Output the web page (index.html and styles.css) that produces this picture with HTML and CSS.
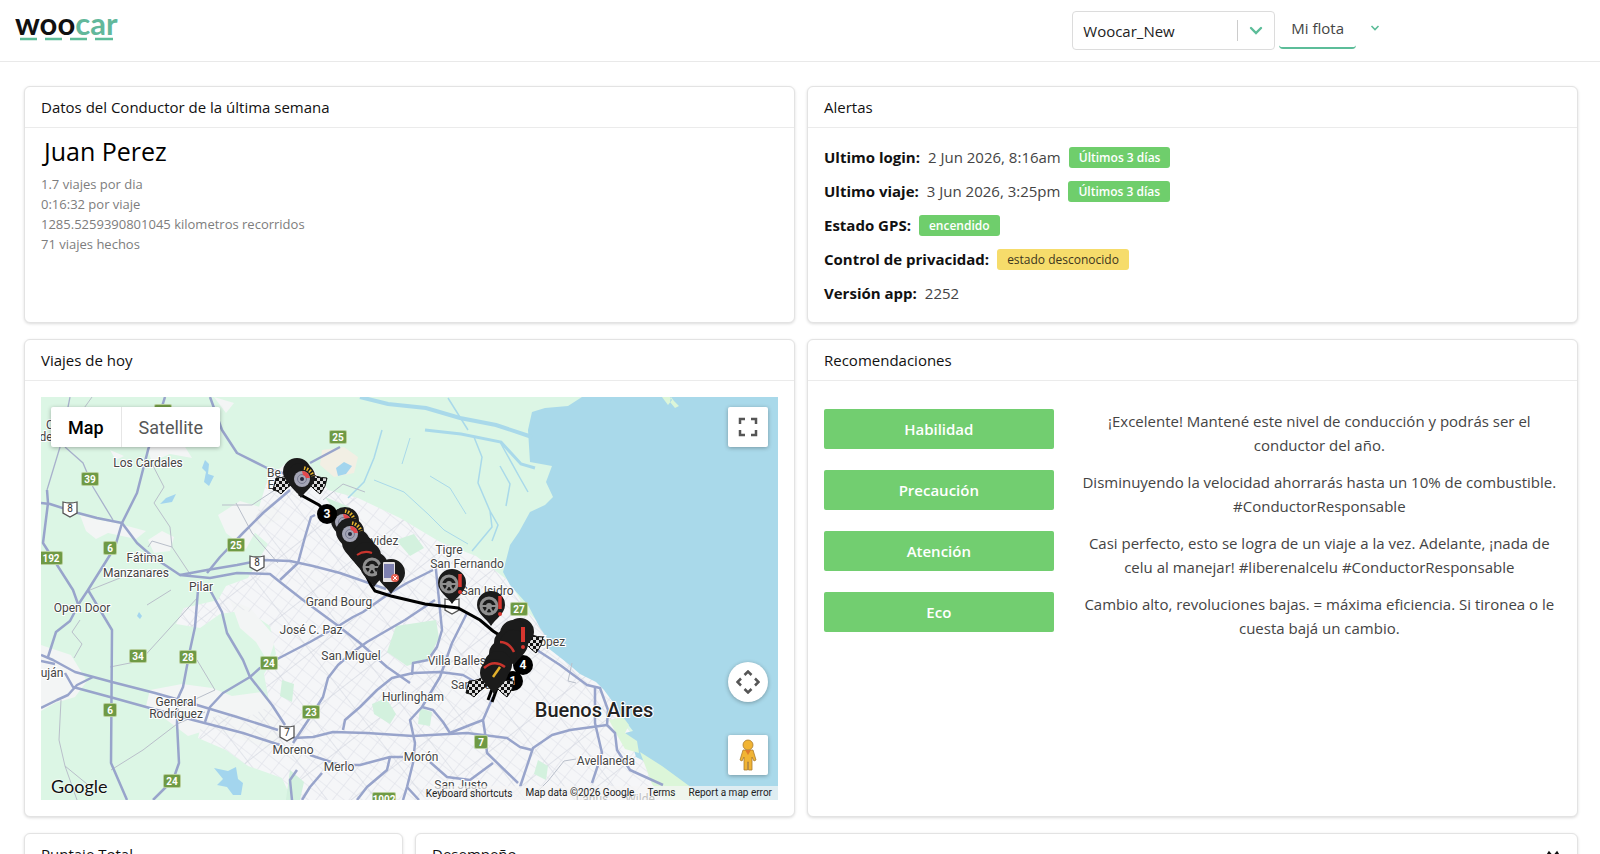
FILE: index.html
```html
<!DOCTYPE html>
<html lang="es">
<head>
  <meta charset="UTF-8">
  <meta name="viewport" content="width=device-width, initial-scale=1">
  <title>Woocar - Conductor</title>
  <link rel="stylesheet" href="styles.css">
</head>
<body>
  <header class="topbar">
    <a class="logo" href="#" aria-label="woocar">
      <svg width="110" height="40" viewBox="0 0 110 40">
        <text class="logo-text" x="0" y="28">woo<tspan fill="#62b89b">car</tspan></text>
        <path d="M5 32h17M30 32h17M55 32h17M80 32h18" stroke="#5cbd99" stroke-width="2.500"/>
      </svg>
    </a>
    <nav class="topnav">
      <div class="fleet-select">
        <select aria-label="Flota">
          <option>Woocar_New</option>
        </select>
        <svg class="fleet-arrow" width="14" height="10" viewBox="0 0 14 10"><path d="M2 2l5 5 5-5" fill="none" stroke="#5cbd99" stroke-width="2.400" stroke-linecap="round"/></svg>
      </div>
      <a class="tab" href="#">Mi flota</a>
      <button class="user-menu" aria-label="Menú">
        <svg width="10" height="8" viewBox="0 0 10 8"><path d="M1.500 2L5 5.500 8.500 2" fill="none" stroke="#5cbd99" stroke-width="1.600"/></svg>
      </button>
    </nav>
  </header>

  <main class="page">
    <div class="row halves">
      <section class="card">
        <h2>Datos del Conductor de la última semana</h2>
        <div class="card-body driver">
          <h3>Juan Perez</h3>
          <p>1.7 viajes por dia</p>
          <p>0:16:32 por viaje</p>
          <p>1285.5259390801045 kilometros recorridos</p>
          <p>71 viajes hechos</p>
        </div>
      </section>
      <section class="card">
        <h2>Alertas</h2>
        <div class="card-body alerts">
          <p><strong>Ultimo login:</strong><span>2 Jun 2026, 8:16am</span><span class="badge">Últimos 3 días</span></p>
          <p><strong>Ultimo viaje:</strong><span>3 Jun 2026, 3:25pm</span><span class="badge">Últimos 3 días</span></p>
          <p><strong>Estado GPS:</strong><span class="badge">encendido</span></p>
          <p><strong>Control de privacidad:</strong><span class="badge warning">estado desconocido</span></p>
          <p><strong>Versión app:</strong><span>2252</span></p>
        </div>
      </section>
    </div>

    <div class="row halves">
      <section class="card">
        <h2>Viajes de hoy</h2>
        <div class="card-body">
          <div class="map">
            <svg class="map-canvas" viewBox="41 397 737 403" preserveAspectRatio="xMidYMid slice">
              <defs>
                <pattern id="streets" width="13" height="11" patternUnits="userSpaceOnUse" patternTransform="rotate(38)">
                  <path d="M0 0h13M0 0v11" stroke="#dde0e7" stroke-width="1.200"/>
                </pattern>
                <pattern id="avenues" width="47" height="39" patternUnits="userSpaceOnUse" patternTransform="rotate(52)">
                  <path d="M0 0h47M0 0v39" stroke="#d0d4de" stroke-width="1.200"/>
                </pattern>
                <pattern id="checks" width="6" height="6" patternUnits="userSpaceOnUse">
                  <rect width="6" height="6" fill="#111"/>
                  <path d="M0 0h3v3H0zM3 3h3v3H3z" fill="#ddd"/>
                </pattern>
                <path id="pin" d="M0 21C-4 14-14 9-14 0A14 14 0 0 1 14 0C14 9 4 14 0 21z" fill="#1b1b1b"/>
                <g id="wheel">
                  <circle r="8" fill="none" stroke="#8f8f8f" stroke-width="3"/>
                  <circle r="3" fill="#8f8f8f"/>
                  <path d="M-7 0H7M0 0l-4 7M0 0l4 7" stroke="#8f8f8f" stroke-width="2"/>
                </g>
                <g id="disc">
                  <circle r="8" fill="#a4a5b5"/>
                  <circle r="4.500" fill="none" stroke="#777a92"/>
                  <circle r="2" fill="#26283c"/>
                  <path d="M0-8A8 8 0 0 1 8-1L4-1A4 4 0 0 0 1-4z" fill="#e5484d"/>
                  <path d="M2-11A12 12 0 0 1 11-3" fill="none" stroke="#e8b62c" stroke-width="3.500" stroke-dasharray="1.500 1.500"/>
                </g>
                <path id="flag-left" d="M8-13Q2-6-9-6L-12 6Q-8 6-4 10L2 4 10-2z" fill="url(#checks)" stroke="#111"/>
                <path id="flag-right" d="M-8-13Q-2-6 10-6L8 2Q6 6 3 10L-2 6-10-2z" fill="url(#checks)" stroke="#111"/>
                <g id="alert"><path d="M12-9v13" stroke="#d8362f" stroke-width="3.500"/><circle cx="12" cy="9" r="2" fill="#d8362f"/></g>
                <path id="route-shield" d="M-7-7Q0-5 7-7V4L0 8-7 4z" fill="#fff" stroke="#555" stroke-width="1.300"/>
                <g id="rp2"><rect x="-9" y="-7" width="18" height="14" rx="2" fill="#b8cf9e"/><rect x="-8" y="-6" width="16" height="12" rx="1" fill="#6f9a45"/></g>
                <g id="rp1"><rect x="-7" y="-7" width="14" height="14" rx="2" fill="#b8cf9e"/><rect x="-6" y="-6" width="12" height="12" rx="1" fill="#6f9a45"/></g>
                <g id="rp3"><rect x="-12" y="-7" width="24" height="14" rx="2" fill="#b8cf9e"/><rect x="-11" y="-6" width="22" height="12" rx="1" fill="#6f9a45"/></g>
                <path id="urban" d="M268 478l22-18 20 5 18 25 30 8 42 20 40 24 36 14 34 26 16 28 22 22 34 24 22 28 20 40 34 44 30 32H292l-10-22-34-12-22-16-28-12 4-16 24-10 20 6 24-12-6-32 12-20-6-28-24-16-26 4-20 14-24-4 8-16 34-8 8-14 22-8 20-34-16-14z"/>
              </defs>

              <!-- land and towns -->
              <rect x="41" y="397" width="737" height="403" fill="#dcf6e5"/>
              <use href="#urban" fill="#f5f6f8"/>
              <g fill="#f3f5f5">
                <path d="M144 440l14-8 24 10 10 16-22-4-18 8zM80 515l14 4 22 4 30 8-10 8-28-6-12 6-10-8zM148 540l14-9 12 6-4 14-16 2zM41 645l30 10 16 26-12 16-20 6-14 8zM150 690l32-6 30 4 20 8 30-4 18 20v40l-44-14-22-10-26 8-24-18-18-12z"/>
                <path d="M218 515l22-14 20 6 16-4 6 16-24 8-12 22-20-16zM214 397l12 16 8-10zM110 450l6 10 8-4z"/>
                <path d="M230 600l20 8 26 30-8 24-12-20-16-14z"/>
              </g>
              <use href="#urban" fill="url(#streets)"/>
              <use href="#urban" fill="url(#avenues)"/>
              <g fill="#d3f1de">
                <path d="M396 626l40-6 3 18-10 20-22 8-20-14zM372 704l14-6 10 16-6 10-16-10zM282 680l12 4-2 18-12-6zM420 708l12 4-2 14-12-2zM538 760l10 6-2 14-12-6zM290 770l14 12-4 18h-14zM396 540l18-6 10 14-14 8z"/>
                <path d="M325 497l24 10 10 14-20-4z"/>
              </g>
              <path d="M322 450l22-3 14 10-4 16-20 4-14-12z" fill="#f2efe4"/>

              <!-- Rio de la Plata and delta -->
              <path d="M582 397H778V800H700L684 786 666 778 652 765 636 757 633 747 625 733 633 731 619 713 615 705 604 690 596 682 580 674 566 662 548 648 552 645 540 628 528 605 510 585 503 572 510 545 519 532 530 512 545 505 553 497 546 482 552 466 530 462 528 430 532 412 545 408 568 406z" fill="#a9d9ea"/>
              <path d="M662 397l6 8 4-5-2-3zM671 397l3 4 5 5-4 2-5-6zM609 720l14-3 6 8-4 8 12 8 2 12-14-4-8-14zM640 752l22 14 30 22 8 12h-36l-12-16z" fill="#dcf6d9"/>
              <g fill="none" stroke="#a9d9ea">
                <path d="M360 397l28 7 38 4 34 10 36 7 36 12" stroke-width="4"/>
                <path d="M425 430l36 4 40 8 20 22 14 4" stroke-width="3"/>
                <path d="M474 437l8 20-4 26 12 28 2 16-20 24M490 511l8 14-6 16M382 430l-8 28-10 24-16 16M448 398l20 32M500 442l20 36 8 14M500 466l10 18-4 22" stroke-width="1.500"/>
                <path d="M374 480l30 12 24 22 16 16 24 14M410 438l-8 26M430 476l20 12 16 26" stroke-width="1"/>
              </g>
              <path d="M205 460l4 4-1 10 6 2-5 10-5-4 2-10-4-4zM160 504l6-6 10-4-4 8zM336 468l8-6 8 4-6 8-8 2zM214 768l14 3 8-4 2 12 5 4-2 12h-8l-6-8-10-2 6-6zM139 612l3 4-2 3-3-3z" fill="#a3d5ee"/>

              <!-- secondary roads -->
              <g fill="none" stroke="#b9bfca" stroke-width="1">
                <path d="M150 460l14 27-10 16 16 24 2 20M172 547l-20-6-4 6M172 547l12 18 8 12M290 480l-38 25-30 0M236 503l16 30 26 30"/>
                <path d="M82 411l10-14M110 667l30-6 58-64M197 660l18 30-30 14M61 700l-2 40 6 26 12 34M65 766l22 18M111 770l32-20 34-26 28-12M80 620l-8 12 10 12-8 14M147 605l16-10 8-5M90 590l30-12"/>
                <path d="M323 500l20-16 22 8M572 663l-4 18 8 2M576 759l-12 2-16 20-10 10"/>
              </g>

              <!-- highways -->
              <g class="roads">
                <path d="M165 397l-5 16-12 37-11 43-15 30-7 24-27 43-8 12-10 19-14 11-8 25"/>
                <path d="M210 397l12 33 15 23 30 15 25 8M340 447l-30 16"/>
                <path d="M47 490l1 13-5 40 30 47 5 14M88 590l24 40-1 133 16 37"/>
                <path d="M41 503l9 1 28 9 19 5 25 5 15 20 16 14 27 18 27-5 30-5 26-5 27 1 23 5 27 7 46 16"/>
                <path d="M180 575l30 3 27-5 33 1 10 8 23 18 34 25 23 18 27 24 23 16"/>
                <path d="M290 490l-27 23-20 20-23 24-13 16M315 515l-4 2-6 20-7 26-18 17"/>
                <path d="M41 655l12 5 22 12 37 10 43 11 42 12 40 12 41 13"/>
                <path d="M41 661l14 3M65 673l8 14 37 10 47 13 36 10 50 13 37 12"/>
                <path d="M41 708l16-8 11-5 9-10 16-8"/>
                <path d="M198 590l-3 37-5 23-7 37-5 11-1 25 2 40-6 17-20 20"/>
                <path d="M210 590l12 22 5 21 16 27 7 17 22 28 13 20"/>
                <path d="M433 570l-26 13-17 10-27 19-10 5-13 8-30 17-50 26-10 9-27 16-13 14-5 15"/>
                <path d="M435 600l-30 20-38 22-14 10-15 13-10 13-5 19-10 16-20 30"/>
                <path d="M435 560l5 50 2 20-5 17-9 13-15 3-1 12M467 613l-15 30-12 34-18 30-12 13 5 23-2 20-6 24-4 13"/>
                <path d="M343 730l2-10 15-13 17-17 15-12 21-5 27-1 23 3 14 8"/>
                <path d="M293 738l20-1 20-5 34 1 46 3 54-3 40 5 13 9 12 3"/>
                <path d="M422 707l11 3 10 12 7 11 20-8 13-5 2 13 2 20 31 30M493 697l-10 23"/>
                <path d="M310 755l30 10h20l30-8h13M390 757l-3 13-20 17-10 13M297 770l-7 10 2 20M322 773l-12 14-8 13"/>
                <path d="M430 762l17 15 23 3 23-17M407 787l12 13"/>
                <path d="M530 645l10 7 20 13 27 20 13 3 8 22-1 15 8 8 2 17 13 20 33 15"/>
                <path d="M595 688v35l7 30-10 30M607 725l-37 5-18 5-19 13-13 39"/>
              </g>
              <path d="M70 397l-10 50-13 43M65 447l18 16 10 24 20 33" fill="none" stroke="#a8b1cc" stroke-width="1.300"/>

              <!-- route signs -->
              <use href="#rp2" x="163" y="411"/>
              <use href="#rp2" x="338" y="437"/><use href="#rp2" x="90" y="479"/><use href="#rp1" x="110" y="548"/>
              <use href="#rp3" x="51" y="558"/><use href="#rp2" x="236" y="545"/><use href="#rp2" x="138" y="656"/>
              <use href="#rp2" x="188" y="657"/><use href="#rp2" x="269" y="663"/><use href="#rp1" x="110" y="710"/>
              <use href="#rp2" x="172" y="781"/><use href="#rp2" x="311" y="712"/><use href="#rp1" x="481" y="742"/>
              <use href="#rp2" x="519" y="609"/><use href="#rp3" x="384" y="799"/>
              <g class="sign-text">
                <text x="338" y="441">25</text><text x="90" y="483">39</text><text x="110" y="552">6</text>
                <text x="51" y="562">192</text><text x="236" y="549">25</text><text x="138" y="660">34</text>
                <text x="188" y="661">28</text><text x="269" y="667">24</text><text x="110" y="714">6</text>
                <text x="172" y="785">24</text><text x="311" y="716">23</text><text x="481" y="746">7</text>
                <text x="519" y="613">27</text><text x="384" y="803">1002</text>
              </g>
              <use href="#route-shield" x="70" y="509"/><use href="#route-shield" x="257" y="563"/>
              <use href="#route-shield" x="287" y="733"/><use href="#route-shield" x="452" y="606"/>
              <g class="sign-text dark"><text x="70" y="512">8</text><text x="257" y="566">8</text><text x="287" y="736">7</text></g>

              <!-- places -->
              <g class="places">
                <text x="50" y="429">C</text><text x="46" y="441">de</text>
                <text x="148" y="467">Los Cardales</text>
                <text x="274" y="477">Be</text><text x="271" y="489">E</text>
                <text x="145" y="562">Fátima</text><text x="136" y="577">Manzanares</text>
                <text x="201" y="591">Pilar</text><text x="82" y="612">Open Door</text><text x="52" y="677">uján</text>
                <text x="176" y="706">General</text><text x="176" y="718">Rodríguez</text>
                <text x="371" y="545">Benavidez</text><text x="449" y="554">Tigre</text><text x="467" y="568">San Fernando</text>
                <text x="487" y="595">San Isidro</text><text x="339" y="606">Grand Bourg</text>
                <text x="311" y="634">José C. Paz</text><text x="351" y="660">San Miguel</text>
                <text x="464" y="665">Villa Ballester</text><text x="480" y="689">San Martín</text>
                <text x="549" y="646">López</text><text x="413" y="701">Hurlingham</text>
                <text x="293" y="754">Moreno</text><text x="339" y="771">Merlo</text><text x="421" y="761">Morón</text>
                <text x="461" y="789">San Justo</text><text x="606" y="765">Avellaneda</text>
                <text x="592" y="803">Lanús</text><text x="640" y="803">Wilde</text>
                <text class="city" x="594" y="717">Buenos Aires</text>
              </g>

              <!-- trips of the day -->
              <path d="M299 494l20 11 10 10 22 30 20 40 4 6 16 5 34 8 33 4 22 12 13 11 14 9M500 680l-8 22M494 684l-6 16" fill="none" stroke="#000" stroke-width="3"/>
              <use href="#flag-left" x="285" y="484"/><use href="#flag-right" x="317" y="484"/>
              <use href="#pin" x="297" y="472"/><use href="#pin" x="301" y="477"/><use href="#disc" x="302" y="479"/>
              <use href="#pin" x="345" y="521"/><use href="#disc" x="343" y="522"/>
              <use href="#pin" x="350" y="532"/><use href="#pin" x="356" y="543"/><use href="#pin" x="361" y="549"/><use href="#disc" x="350" y="534"/>
              <use href="#pin" x="367" y="556"/><use href="#pin" x="374" y="566"/>
              <path d="M357 555q7-5 15-2" fill="none" stroke="#c9342d" stroke-width="2"/>
              <use href="#wheel" x="372" y="567"/>
              <use href="#pin" x="391" y="573"/>
              <rect x="383" y="562" width="12" height="20" rx="1" fill="#e2dfe2"/><rect x="384" y="564" width="10" height="14" fill="#7e80b0"/>
              <circle cx="395" cy="578" r="4" fill="#e96354"/><path d="M393 576l4 4M397 576l-4 4" stroke="#fff"/>
              <use href="#pin" x="452" y="583"/><use href="#wheel" x="449" y="584"/><use href="#alert" x="448" y="583"/>
              <use href="#pin" x="491" y="605"/><use href="#wheel" x="489" y="606"/><use href="#alert" x="488" y="605"/>
              <circle cx="523" cy="665" r="10"/><circle cx="513" cy="681" r="10"/><circle cx="327" cy="514" r="10"/>
              <g class="trip-no"><text x="327" y="518">3</text><text x="523" y="669">4</text><text x="513" y="685">1</text></g>
              <use href="#flag-right" x="533" y="643"/><use href="#flag-left" x="478" y="687"/><use href="#flag-right" x="504" y="687"/>
              <use href="#pin" x="520" y="632"/><use href="#pin" x="514" y="634"/><use href="#pin" x="508" y="643"/><use href="#pin" x="514" y="644"/>
              <use href="#pin" x="503" y="654"/><use href="#pin" x="498" y="665"/><use href="#pin" x="494" y="673"/>
              <path d="M484 668q10-9 21-1M500 642q9 0 14 10" fill="none" stroke="#c9342d" stroke-width="2.500"/>
              <path d="M493 677l7-10" stroke="#e3b02c" stroke-width="2.500"/>
              <path d="M523 627v15" stroke="#d8362f" stroke-width="4"/><circle cx="523" cy="647" r="2" fill="#d8362f"/>
            </svg>

            <div class="map-type">
              <button class="active">Map</button>
              <button>Satellite</button>
            </div>
            <button class="map-btn fullscreen" aria-label="Toggle fullscreen view">
              <svg width="20" height="20" viewBox="0 0 20 20"><path d="M2 7V2h5M13 2h5v5M18 13v5h-5M7 18H2v-5" fill="none" stroke="#555" stroke-width="2.500"/></svg>
            </button>
            <button class="map-btn camera" aria-label="Map camera controls">
              <svg width="24" height="24" viewBox="0 0 24 24"><path d="M8.500 5L12 1.500 15.500 5M19 8.500l3.500 3.500-3.500 3.500M15.500 19L12 22.500 8.500 19M5 15.500L1.500 12 5 8.500" fill="none" stroke="#555" stroke-width="2.500"/></svg>
            </button>
            <button class="map-btn pegman" aria-label="Street View">
              <svg width="18" height="32" viewBox="0 0 18 32">
                <path d="M4 11h10l3 10-2 1-2-4v13H9.500v-8h-1v8H5V18l-2 4-2-1z" fill="#f1b434" stroke="#a97b2f" stroke-width=".8"/>
                <circle cx="9" cy="6" r="5" fill="#f1b434" stroke="#a97b2f" stroke-width=".8"/>
                <path d="M6 11h6l-3 5z" fill="#e07b2b"/>
              </svg>
            </button>
            <a class="google" href="#">Google</a>
            <div class="map-legal">
              <button>Keyboard shortcuts</button>
              <span>Map data ©2026 Google</span>
              <a href="#">Terms</a>
              <a href="#">Report a map error</a>
            </div>
          </div>
        </div>
      </section>

      <section class="card">
        <h2>Recomendaciones</h2>
        <div class="card-body tips">
          <button>Habilidad</button>
          <p>¡Excelente! Mantené este nivel de conducción y podrás ser el conductor del año.</p>
          <button>Precaución</button>
          <p>Disminuyendo la velocidad ahorrarás hasta un 10% de combustible. #ConductorResponsable</p>
          <button>Atención</button>
          <p>Casi perfecto, esto se logra de un viaje a la vez. Adelante, ¡nada de celu al manejar! #liberenalcelu #ConductorResponsable</p>
          <button>Eco</button>
          <p>Cambio alto, revoluciones bajas. = máxima eficiencia. Si tironea o le cuesta bajá un cambio.</p>
        </div>
      </section>
    </div>

    <div class="row score">
      <section class="card">
        <h2>Puntaje Total</h2>
        <div class="card-body"></div>
      </section>
      <section class="card">
        <h2>Desempeño
          <svg width="16" height="8" viewBox="0 0 16 8"><path d="M1 7l3-5 4 5 4-5 3 5" fill="none" stroke="#111" stroke-width="1.500"/></svg>
        </h2>
        <div class="card-body"></div>
      </section>
    </div>
  </main>
</body>
</html>
```

FILE: styles.css
```css
* { box-sizing: border-box; }
body { margin: 0; height: 100vh; overflow: hidden; background: #fff; color: #111; font-family: "Open Sans", "Noto Sans", sans-serif; font-size: 15px; line-height: 24px; }
h2, h3, p { margin: 0; font-weight: 400; }
button { font-family: inherit; border: 0; padding: 0; cursor: pointer; }
a { color: inherit; text-decoration: none; }
svg { display: block; }

/* top bar */
.topbar { display: flex; justify-content: space-between; height: 62px; padding: 7px 216px 0 15px; border-bottom: 1px solid #e9e9e9; }
.logo-text { font-family: Lato, sans-serif; font-size: 31px; font-weight: 700; fill: #111; }
.topnav { display: flex; align-items: flex-start; gap: 4px; padding-top: 4px; }
.fleet-select { position: relative; width: 203px; }
.fleet-select select { appearance: none; width: 100%; height: 39px; padding: 0 10px; border: 1px solid #dcdcdc; border-radius: 4px; background: #fff; color: #222; font: inherit; }
.fleet-select::after { content: ""; position: absolute; right: 37px; top: 9px; width: 1px; height: 21px; background: #ccc; }
.fleet-arrow { position: absolute; right: 12px; top: 15px; }
.tab { height: 38px; padding: 5px 12px; border-bottom: 2px solid #5cbd99; border-radius: 4px; color: #444; }
.user-menu { width: 24px; height: 34px; padding-left: 10px; background: none; }

/* cards */
.page { padding: 24px 22px 0 24px; }
.row { display: grid; gap: 12px; margin-bottom: 16px; }
.halves { grid-template-columns: 1fr 1fr; }
.score { grid-template-columns: 379px 1fr; }
.card { border: 1px solid #e3e3e3; border-radius: 6px; box-shadow: 0 1px 3px rgba(0, 0, 0, .14); background: #fff; }
.card h2 { display: flex; justify-content: space-between; align-items: center; height: 41px; padding: 0 16px; border-bottom: 1px solid #ebebeb; font-size: 15px; }
.card-body { padding: 16px; }

.driver { padding-top: 7px; color: #7d7d7d; font-size: 13px; line-height: 20px; }
.driver h3 { margin: 0 0 7px 3px; color: #000; font-size: 25px; line-height: 32px; }

.alerts { display: flex; flex-direction: column; gap: 8px; }
.alerts p { display: flex; align-items: center; gap: 8px; line-height: 26px; }
.alerts span { color: #444; }
.alerts strong { font-weight: 700; }
.alerts .badge { padding: 0 10px; border-radius: 3px; background: #6fce6c; color: #fff; font-size: 12px; font-weight: 600; line-height: 21px; }
.alerts .warning { background: #f6dc6b; color: #3c3620; font-weight: 400; }

.tips { display: grid; grid-template-columns: 19fr 40fr; gap: 13px 24px; padding-top: 28px; }
.tips button { height: 40px; border-radius: 2px; background: #72ce70; color: #fff; font-size: 15px; font-weight: 600; }
.tips p { text-align: center; color: #444; }

/* map */
.map { position: relative; height: 403px; overflow: hidden; font-family: Roboto, sans-serif; }
.map-canvas { width: 100%; height: 100%; }
.roads { fill: none; stroke: #98a4cb; stroke-width: 2.5; stroke-linejoin: round; }
.places { font-size: 12px; fill: #444; stroke: #fff; stroke-width: 2px; paint-order: stroke; text-anchor: middle; }
.places .city { font-size: 20px; font-weight: 500; fill: #222; }
.sign-text { font-size: 10px; font-weight: 700; fill: #fff; text-anchor: middle; }
.sign-text.dark { font-weight: 400; fill: #333; }
.trip-no { font-size: 12px; font-weight: 700; fill: #fff; text-anchor: middle; }

.map-type { position: absolute; left: 10px; top: 10px; display: flex; box-shadow: 0 1px 4px rgba(0, 0, 0, .3); border-radius: 2px; background: #fff; }
.map-type button { height: 40px; padding: 0 17px; background: none; color: #565656; font-size: 18px; }
.map-type button + button { border-left: 1px solid #e6e6e6; }
.map-type .active { color: #000; font-weight: 500; }
.map-btn { position: absolute; right: 10px; display: grid; place-items: center; width: 40px; height: 40px; border-radius: 2px; background: #fff; box-shadow: 0 1px 4px rgba(0, 0, 0, .3); }
.fullscreen { top: 10px; }
.camera { bottom: 98px; border-radius: 50%; }
.pegman { bottom: 25px; }
.google { position: absolute; left: 10px; bottom: 2px; color: #111; font-family: Lato, sans-serif; font-size: 18px; text-shadow: 0 0 2px #fff, 0 0 2px #fff; }
.map-legal { position: absolute; right: 0; bottom: 0; display: flex; gap: 13px; padding: 0 6px 0 2px; background: rgba(245, 245, 245, .7); color: #222; font-size: 10px; line-height: 14px; }
.map-legal button { background: none; color: inherit; font-size: 10px; }
```
